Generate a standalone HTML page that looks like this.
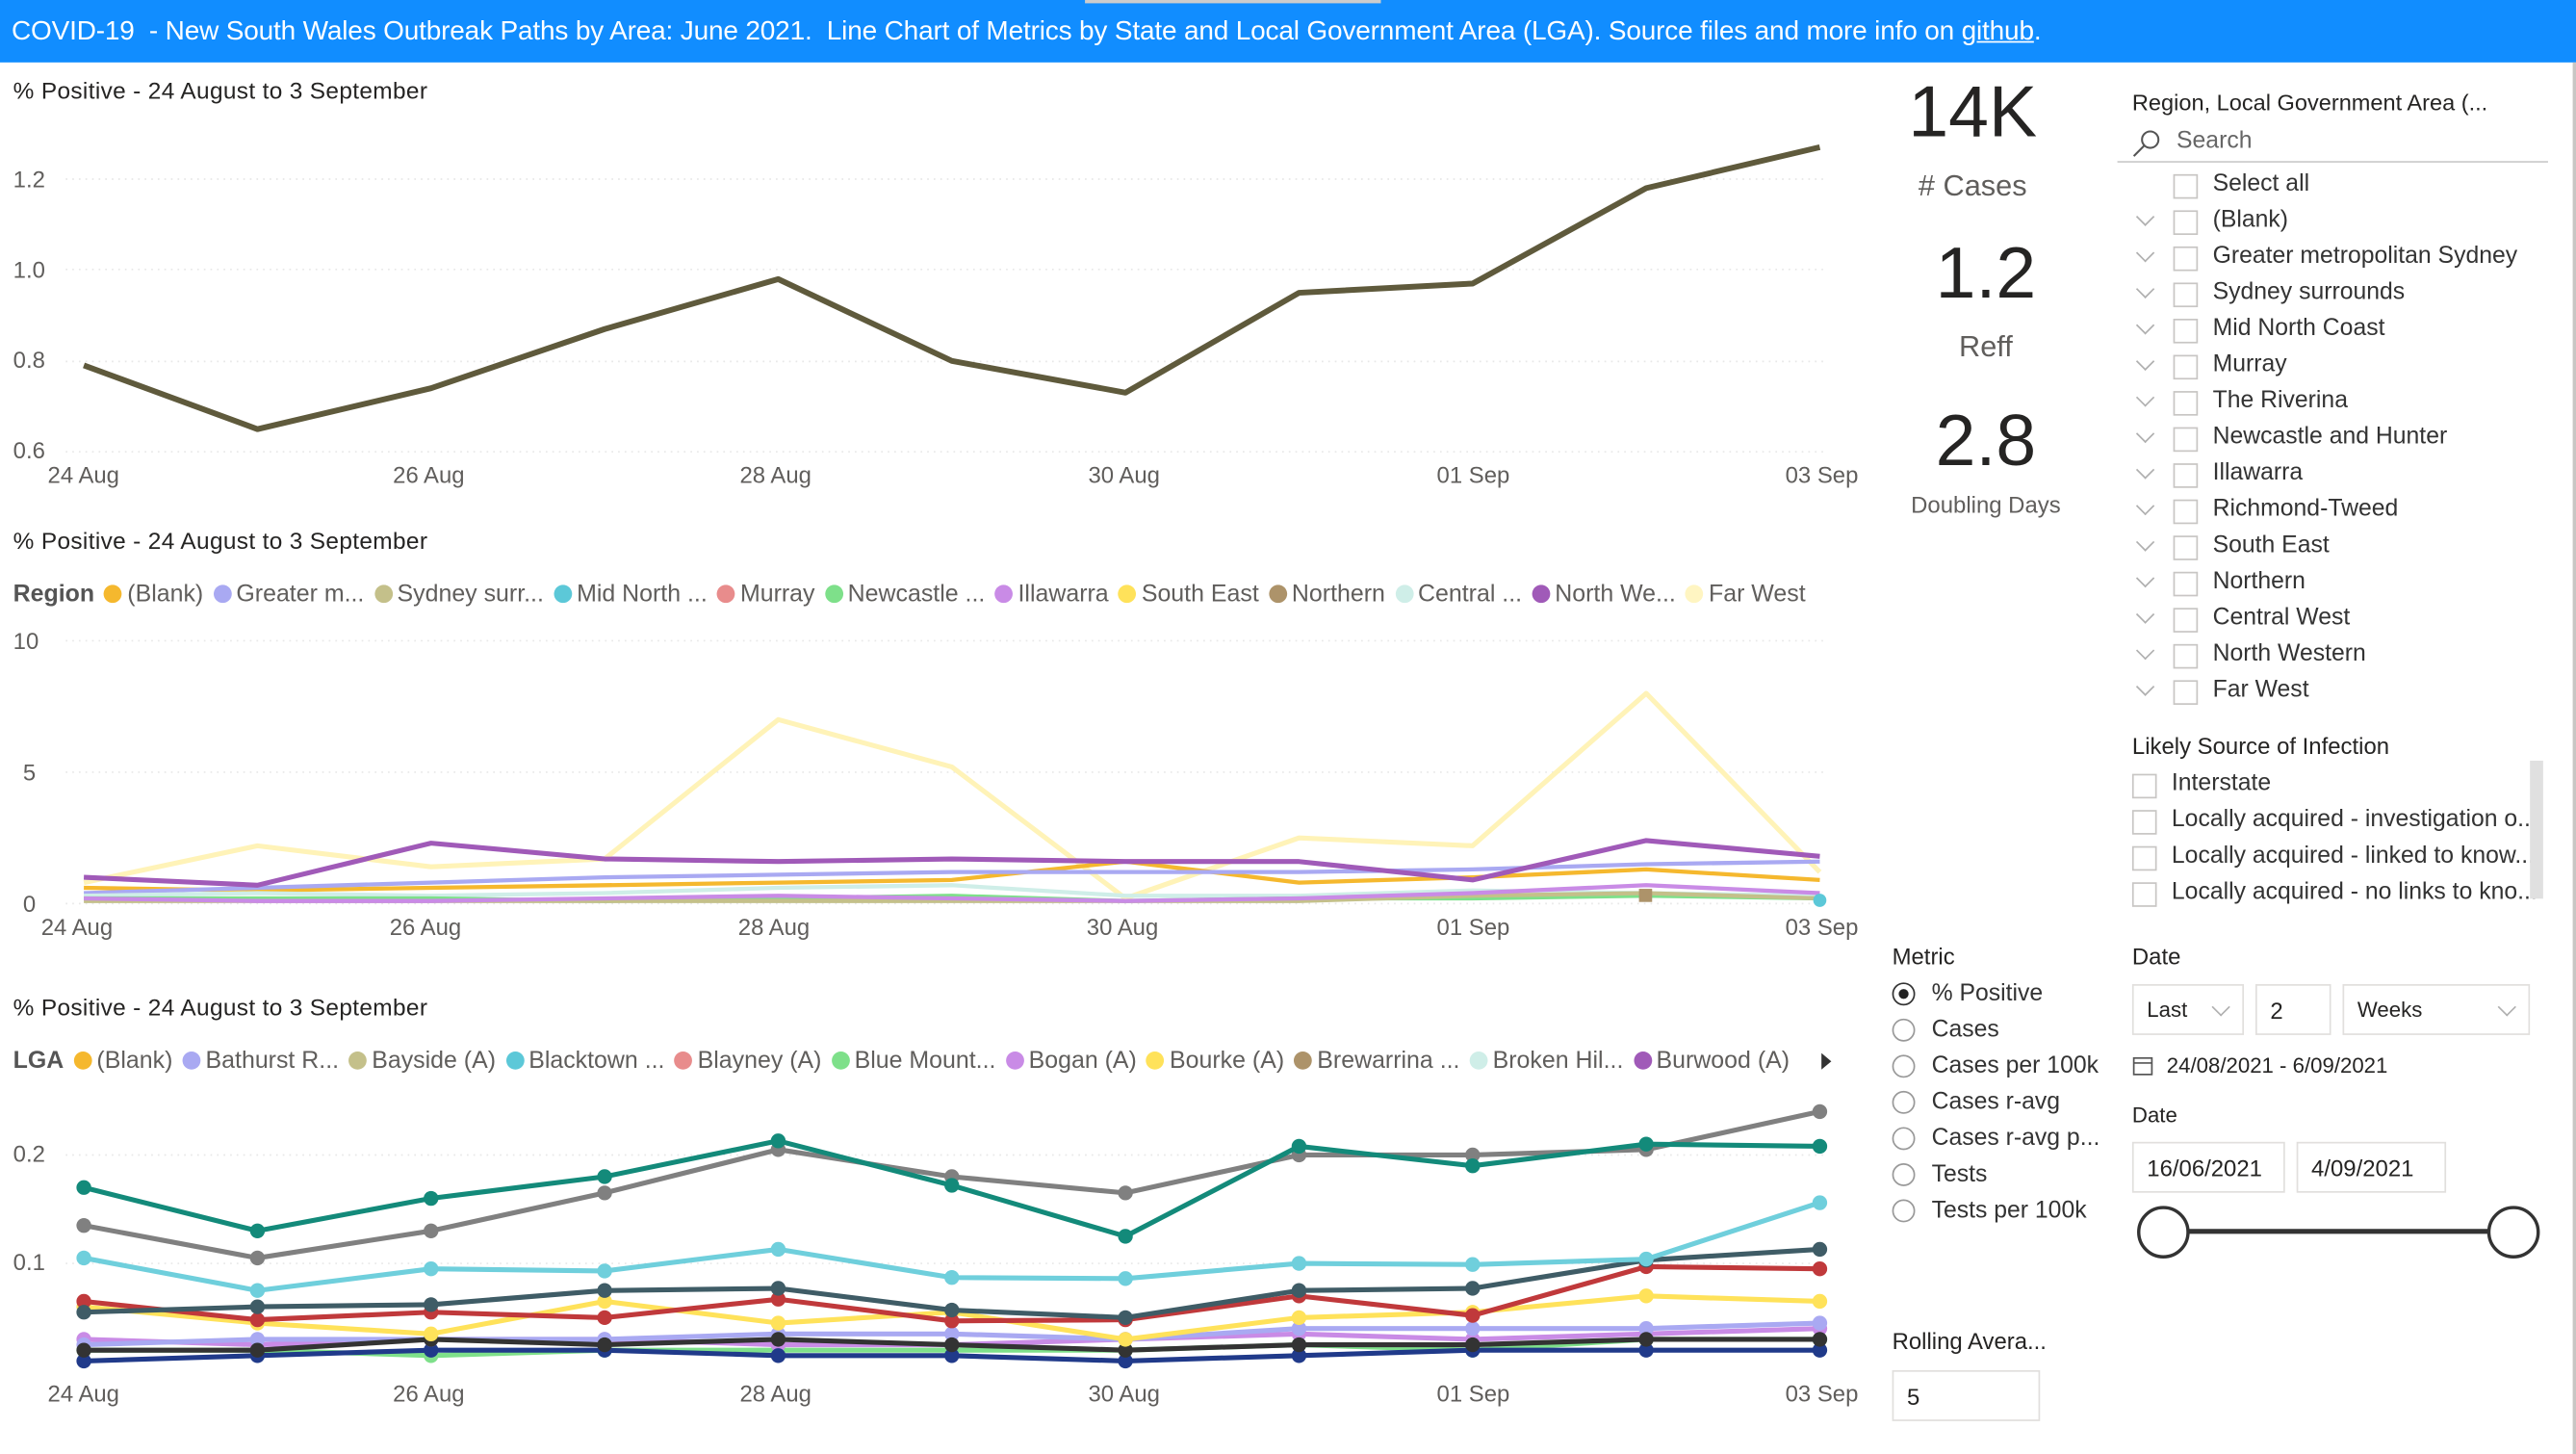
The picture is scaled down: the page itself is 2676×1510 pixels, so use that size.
<!DOCTYPE html>
<html><head><meta charset="utf-8">
<style>
html,body{margin:0;padding:0;width:2676px;height:1510px;overflow:hidden;background:#fff}
#s{position:absolute;left:0;top:0;width:1567px;height:885px;transform:scale(1.70772,1.70621);transform-origin:0 0;font-family:"Liberation Sans",sans-serif;color:#252423}
.a{position:absolute;white-space:nowrap}
.hdr{position:absolute;left:0;top:0;width:1567px;height:38px;background:#118dff;color:#fff;font-size:16.4px;line-height:38px;padding-left:7px;box-sizing:border-box;letter-spacing:-0.1px}
.t{font-size:14.3px;letter-spacing:0.2px}
.ax{font-size:14px;color:#605e5c}
.lg{font-size:14.6px;color:#605e5c}
.dot{display:inline-block;width:11px;height:11px;border-radius:50%;margin:0 3px 0 6px;vertical-align:-1px}
.cb{position:absolute;width:13px;height:13px;border:1px solid #c8c6c4;background:#fff}
.sl{font-size:14.5px;color:#333}
.chev{position:absolute;width:7px;height:7px;border-right:1px solid #b0b0b0;border-bottom:1px solid #b0b0b0;transform:rotate(45deg)}
.rad{position:absolute;width:12px;height:12px;border:1px solid #999;border-radius:50%}
.box{position:absolute;border:1px solid #e1dfdd;font-size:14px;line-height:30px;padding-left:8px;box-sizing:border-box}
</style></head><body><div id="s">
<div class="hdr">COVID-19&nbsp; - New South Wales Outbreak Paths by Area: June 2021.&nbsp; Line Chart of Metrics by State and Local Government Area (LGA). Source files and more info on <u>github</u>.</div>
<div class="a" style="left:660px;top:0;width:180px;height:2px;background:#ccc"></div>
<div class="a" style="left:1565px;top:38px;width:2px;height:847px;background:#c8c6c4"></div>

<div class="a t" style="left:8px;top:48px">% Positive - 24 August to 3 September</div>
<div class="a t" style="left:8px;top:322px">% Positive - 24 August to 3 September</div>
<div class="a t" style="left:8px;top:606px">% Positive - 24 August to 3 September</div>

<div class="a ax" style="left:8px;top:101px">1.2</div>
<div class="a ax" style="left:8px;top:156px">1.0</div>
<div class="a ax" style="left:8px;top:211px">0.8</div>
<div class="a ax" style="left:8px;top:266px">0.6</div>
<div class="a ax" style="left:8px;top:382px">10</div>
<div class="a ax" style="left:14px;top:462px">5</div>
<div class="a ax" style="left:14px;top:542px">0</div>
<div class="a ax" style="left:8px;top:694px">0.2</div>
<div class="a ax" style="left:8px;top:760px">0.1</div>

<div class="a ax" style="left:29px;top:281px">24 Aug</div><div class="a ax" style="left:239px;top:281px">26 Aug</div><div class="a ax" style="left:450px;top:281px">28 Aug</div><div class="a ax" style="left:662px;top:281px">30 Aug</div><div class="a ax" style="left:874px;top:281px">01 Sep</div><div class="a ax" style="left:1086px;top:281px">03 Sep</div>
<div class="a ax" style="left:25px;top:556px">24 Aug</div><div class="a ax" style="left:237px;top:556px">26 Aug</div><div class="a ax" style="left:449px;top:556px">28 Aug</div><div class="a ax" style="left:661px;top:556px">30 Aug</div><div class="a ax" style="left:874px;top:556px">01 Sep</div><div class="a ax" style="left:1086px;top:556px">03 Sep</div>
<div class="a ax" style="left:29px;top:840px">24 Aug</div><div class="a ax" style="left:239px;top:840px">26 Aug</div><div class="a ax" style="left:450px;top:840px">28 Aug</div><div class="a ax" style="left:662px;top:840px">30 Aug</div><div class="a ax" style="left:874px;top:840px">01 Sep</div><div class="a ax" style="left:1086px;top:840px">03 Sep</div>

<div class="a lg" style="left:8px;top:354px"><b style="color:#555">Region</b><span class="dot" style="background:#f5b82e"></span>(Blank)<span class="dot" style="background:#a9a9f2"></span>Greater m...<span class="dot" style="background:#c4c08a"></span>Sydney surr...<span class="dot" style="background:#5cc8d8"></span>Mid North ...<span class="dot" style="background:#e88c8c"></span>Murray<span class="dot" style="background:#7ee08a"></span>Newcastle ...<span class="dot" style="background:#c98be6"></span>Illawarra<span class="dot" style="background:#ffe25a"></span>South East<span class="dot" style="background:#ad936a"></span>Northern<span class="dot" style="background:#cfeee8"></span>Central ...<span class="dot" style="background:#a05ab8"></span>North We...<span class="dot" style="background:#fff5c2"></span>Far West</div>
<div class="a lg" style="left:8px;top:638px"><b style="color:#555">LGA</b><span class="dot" style="background:#f5b82e"></span>(Blank)<span class="dot" style="background:#a9a9f2"></span>Bathurst R...<span class="dot" style="background:#c4c08a"></span>Bayside (A)<span class="dot" style="background:#5cc8d8"></span>Blacktown ...<span class="dot" style="background:#e88c8c"></span>Blayney (A)<span class="dot" style="background:#7ee08a"></span>Blue Mount...<span class="dot" style="background:#c98be6"></span>Bogan (A)<span class="dot" style="background:#ffe25a"></span>Bourke (A)<span class="dot" style="background:#ad936a"></span>Brewarrina ...<span class="dot" style="background:#cfeee8"></span>Broken Hil...<span class="dot" style="background:#a05ab8"></span>Burwood (A)</div>
<div class="a" style="left:1108px;top:641px;width:0;height:0;border-left:6px solid #333;border-top:5px solid transparent;border-bottom:5px solid transparent"></div>

<svg class="a" style="left:0;top:0" width="1140" height="885" id="g"></svg>

<div class="a" style="left:1150px;top:44px;width:100px;text-align:center;font-size:44px;color:#252423">14K</div>
<div class="a" style="left:1150px;top:103px;width:100px;text-align:center;font-size:18px;color:#605e5c"># Cases</div>
<div class="a" style="left:1158px;top:142px;width:100px;text-align:center;font-size:44px">1.2</div>
<div class="a" style="left:1158px;top:201px;width:100px;text-align:center;font-size:18px;color:#605e5c">Reff</div>
<div class="a" style="left:1158px;top:244px;width:100px;text-align:center;font-size:44px">2.8</div>
<div class="a" style="left:1148px;top:299px;width:120px;text-align:center;font-size:14px;color:#605e5c">Doubling Days</div>

<div class="a" style="left:1297px;top:55px;font-size:13.8px">Region, Local Government Area (...</div>
<svg class="a" style="left:1297px;top:78px" width="18" height="18"><circle cx="11" cy="7" r="5" fill="none" stroke="#555" stroke-width="1.2"/><path d="M7.5 10.5 L1 17" stroke="#555" stroke-width="1.2"/></svg>
<div class="a" style="left:1324px;top:78px;font-size:14.5px;color:#666">Search</div>
<div class="a" style="left:1288px;top:98px;width:262px;height:1px;background:#ccc"></div>
<div id="sl"></div>

<div class="a" style="left:1297px;top:446px;font-size:14px">Likely Source of Infection</div>
<div class="cb" style="left:1297px;top:471px"></div><div class="a sl" style="left:1321px;top:469px">Interstate</div>
<div class="cb" style="left:1297px;top:493px"></div><div class="a sl" style="left:1321px;top:491px">Locally acquired - investigation o...</div>
<div class="cb" style="left:1297px;top:515px"></div><div class="a sl" style="left:1321px;top:513px">Locally acquired - linked to know...</div>
<div class="cb" style="left:1297px;top:537px"></div><div class="a sl" style="left:1321px;top:535px">Locally acquired - no links to kno...</div>
<div class="a" style="left:1539px;top:463px;width:8px;height:84px;background:#e0e0e0"></div>

<div class="a" style="left:1151px;top:574px;font-size:14px">Metric</div>
<div class="rad" style="left:1151px;top:598px;border-color:#333"></div><div class="a" style="left:1155px;top:602px;width:6px;height:6px;border-radius:50%;background:#222"></div>
<div class="a sl" style="left:1175px;top:597px">% Positive</div>
<div class="rad" style="left:1151px;top:620px"></div><div class="a sl" style="left:1175px;top:619px">Cases</div>
<div class="rad" style="left:1151px;top:642px"></div><div class="a sl" style="left:1175px;top:641px">Cases per 100k</div>
<div class="rad" style="left:1151px;top:664px"></div><div class="a sl" style="left:1175px;top:663px">Cases r-avg</div>
<div class="rad" style="left:1151px;top:686px"></div><div class="a sl" style="left:1175px;top:685px">Cases r-avg p...</div>
<div class="rad" style="left:1151px;top:708px"></div><div class="a sl" style="left:1175px;top:707px">Tests</div>
<div class="rad" style="left:1151px;top:730px"></div><div class="a sl" style="left:1175px;top:729px">Tests per 100k</div>

<div class="a" style="left:1151px;top:808px;font-size:14px">Rolling Avera...</div>
<div class="box" style="left:1151px;top:834px;width:90px;height:31px">5</div>

<div class="a" style="left:1297px;top:574px;font-size:14px">Date</div>
<div class="box" style="left:1297px;top:599px;width:68px;height:31px;font-size:13px">Last</div><div class="chev" style="left:1347px;top:609px"></div>
<div class="box" style="left:1372px;top:599px;width:46px;height:31px">2</div>
<div class="box" style="left:1425px;top:599px;width:114px;height:31px;font-size:13px">Weeks</div><div class="chev" style="left:1521px;top:609px"></div>
<svg class="a" style="left:1297px;top:642px" width="14" height="14"><rect x="1" y="2" width="11" height="10" fill="none" stroke="#555"/><path d="M1 5H12" stroke="#555"/></svg>
<div class="a" style="left:1318px;top:641px;font-size:13px">24/08/2021 - 6/09/2021</div>
<div class="a" style="left:1297px;top:671px;font-size:13px">Date</div>
<div class="box" style="left:1297px;top:695px;width:93px;height:31px">16/06/2021</div>
<div class="box" style="left:1397px;top:695px;width:91px;height:31px">4/09/2021</div>
<div class="a" style="left:1316px;top:748px;width:213px;height:3px;background:#333"></div>
<div class="a" style="left:1300px;top:734px;width:28px;height:28px;border:2px solid #333;border-radius:50%;background:#fff"></div>
<div class="a" style="left:1513px;top:734px;width:28px;height:28px;border:2px solid #333;border-radius:50%;background:#fff"></div>
</div>
<script>
var regs=["Select all","(Blank)","Greater metropolitan Sydney","Sydney surrounds","Mid North Coast","Murray","The Riverina","Newcastle and Hunter","Illawarra","Richmond-Tweed","South East","Northern","Central West","North Western","Far West"];
var h="";regs.forEach(function(r,i){var y=105+i*22;if(i>0)h+='<div class="chev" style="left:1301px;top:'+(y+1)+'px"></div>';h+='<div class="cb" style="left:1322px;top:'+(y+1)+'px"></div><div class="a sl" style="left:1346px;top:'+(y-1)+'px">'+r+'</div>';});
document.getElementById("sl").innerHTML=h;
var X=function(i){return 51+i*105.6};var s="";
function line(v,f,c,w,d){var p=v.map(function(a,i){return X(i).toFixed(1)+","+f(a).toFixed(1)}).join(" ");s+='<polyline points="'+p+'" fill="none" stroke="'+c+'" stroke-width="'+w+'" stroke-linejoin="round"/>';if(d)v.forEach(function(a,i){s+='<circle cx="'+X(i)+'" cy="'+f(a)+'" r="4.5" fill="'+c+'"/>'});}
function grid(ys){ys.forEach(function(y){s+='<line x1="40" x2="1110" y1="'+y+'" y2="'+y+'" stroke="#e8e8e8" stroke-dasharray="1,3"/>'})}
grid([109,164,220,275]);grid([390,470,550]);grid([703,769]);
var f1=function(v){return 275-(v-0.6)*276.7};
line([0.79,0.65,0.74,0.87,0.98,0.80,0.73,0.95,0.97,1.18,1.27],f1,"#5f5a3c",3.5);
var f2=function(v){return 550-v*16};
line([0.8,2.2,1.4,1.7,7,5.2,0.2,2.5,2.2,8,1.2],f2,"#fff3b8",3);
line([0.6,0.5,0.6,0.7,0.8,0.9,1.6,0.8,1.0,1.3,0.9],f2,"#f5b82e",2.5);
line([0.4,0.6,0.8,1.0,1.1,1.2,1.2,1.2,1.3,1.5,1.6],f2,"#a9a9f2",2.5);
line([0.3,0.4,0.3,0.4,0.6,0.7,0.3,0.3,0.5,0.4,0.3],f2,"#cfeee8",2.5);
line([0.2,0.2,0.2,0.1,0.2,0.3,0.1,0.2,0.2,0.3,0.2],f2,"#7ee08a",2.5);
line([0.1,0.1,0.1,0.1,0.1,0.1,0.1,0.1,0.3,0.4,0.2],f2,"#c4c08a",2.5);
line([0.2,0.1,0.1,0.2,0.3,0.2,0.1,0.2,0.4,0.7,0.4],f2,"#c98be6",2.5);
line([1,0.7,2.3,1.7,1.6,1.7,1.6,1.6,0.9,2.4,1.8],f2,"#a05ab8",3);
s+='<circle cx="1107" cy="548" r="4" fill="#5cc8d8"/><rect x="997" y="541" width="8" height="8" fill="#ad936a"/>';
var f3=function(v){return 835-v*660};
line([0.02,0.02,0.015,0.02,0.02,0.02,0.02,0.025,0.02,0.03,0.03],f3,"#7ee08a",3,1);
line([0.03,0.025,0.03,0.03,0.025,0.025,0.03,0.035,0.03,0.035,0.04],f3,"#c98be6",3,1);
line([0.01,0.015,0.02,0.02,0.015,0.015,0.01,0.015,0.02,0.02,0.02],f3,"#203a8a",3,1);
line([0.025,0.03,0.03,0.03,0.035,0.035,0.03,0.04,0.04,0.04,0.045],f3,"#a9a9f2",3,1);
line([0.02,0.02,0.03,0.025,0.03,0.025,0.02,0.025,0.025,0.03,0.03],f3,"#333",3,1);
line([0.06,0.045,0.035,0.065,0.045,0.055,0.03,0.05,0.055,0.07,0.065],f3,"#ffe25a",3,1);
line([0.065,0.048,0.055,0.05,0.067,0.047,0.048,0.07,0.052,0.097,0.095],f3,"#c0393b",3,1);
line([0.055,0.06,0.062,0.075,0.077,0.057,0.05,0.075,0.077,0.103,0.113],f3,"#3f5c66",3,1);
line([0.105,0.075,0.095,0.093,0.113,0.087,0.086,0.1,0.099,0.104,0.156],f3,"#6fcfdc",3,1);
line([0.135,0.105,0.13,0.165,0.205,0.18,0.165,0.2,0.2,0.205,0.24],f3,"#808080",3,1);
line([0.17,0.13,0.16,0.18,0.213,0.172,0.125,0.208,0.19,0.21,0.208],f3,"#138a7a",3,1);
document.getElementById("g").innerHTML=s;
</script>
</body></html>
